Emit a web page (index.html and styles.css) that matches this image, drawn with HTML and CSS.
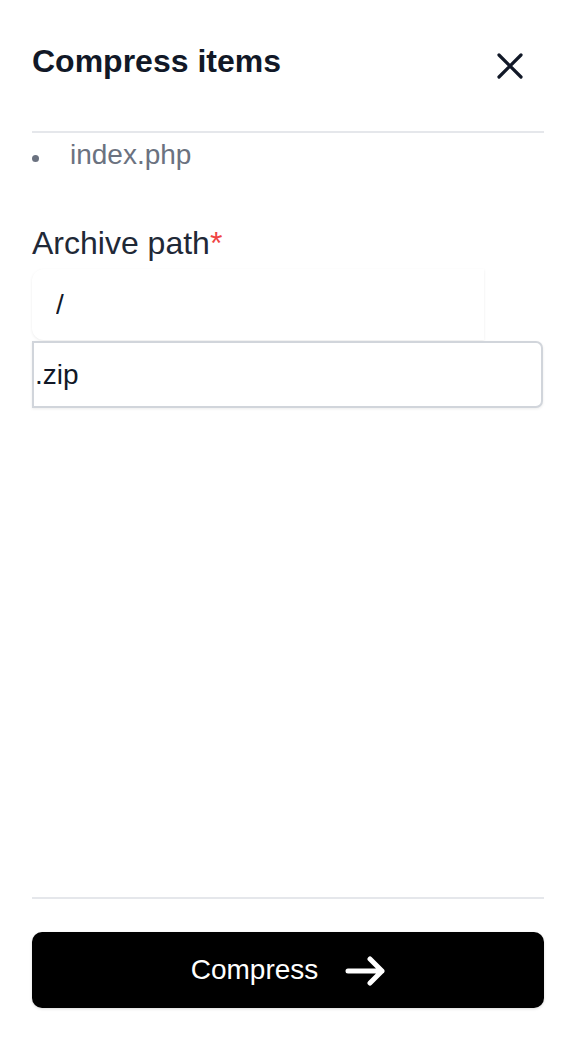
FILE: index.html
```html
<!DOCTYPE html>
<html lang="en">
<head>
<meta charset="utf-8">
<title>Compress items</title>
<link rel="stylesheet" href="styles.css">
</head>
<body>
<div class="dialog">
  <header class="dialog-header">
    <h1 class="dialog-title">Compress items</h1>
    <button class="close-btn" type="button" aria-label="Close">
      <svg width="26" height="26" viewBox="0 0 26 26" fill="none" stroke="#111827" stroke-width="3.2" stroke-linecap="round"><path d="M2 2L24 24M24 2L2 24"/></svg>
    </button>
  </header>
  <main class="dialog-body">
    <ul class="item-list">
      <li class="item">index.php</li>
    </ul>
    <label class="field-label" for="path">Archive path<span class="required">*</span></label>
    <div class="path-field">
      <input id="path" class="path-input" type="text" value="/">
      <input class="suffix-input" type="text" value=".zip">
    </div>
  </main>
  <footer class="dialog-footer">
    <button class="submit-btn" type="button">
      <span>Compress</span>
      <svg width="40" height="30" viewBox="0 0 40 30" fill="none" stroke="#ffffff" stroke-width="5" stroke-linecap="round" stroke-linejoin="round"><path d="M3 15H37M25 3L37 15L25 27"/></svg>
    </button>
  </footer>
</div>
</body>
</html>
```
FILE: styles.css
```css
* { box-sizing: border-box; }
html, body { margin: 0; padding: 0; background: #ffffff; }
body { font-family: "Liberation Sans", Arial, sans-serif; color: #1f2937; }

.dialog {
  height: 100vh;
  display: flex;
  flex-direction: column;
  padding: 0 32px;
}

.dialog-header {
  display: flex;
  justify-content: space-between;
  align-items: flex-start;
  padding-top: 41px;
  padding-bottom: 50px;
  border-bottom: 2px solid #e5e7eb;
}
.dialog-title {
  margin: 0;
  font-size: 32px;
  line-height: 40px;
  font-weight: 700;
  color: #111827;
}
.close-btn {
  margin: 12px 21px 0 0;
  padding: 0;
  border: 0;
  background: transparent;
  width: 26px;
  height: 26px;
  display: flex;
}

.dialog-body { flex: 1; }

.item-list { list-style: none; margin: 0; padding: 2px 0 0; }
.item {
  display: flex;
  align-items: center;
  gap: 31px;
  font-size: 28px;
  line-height: 40px;
  color: #6b7280;
}
.item::before {
  content: "";
  width: 7px;
  height: 7px;
  border-radius: 50%;
  background: #6b7280;
  margin-top: 6px;
}

.field-label {
  display: block;
  margin-top: 44px;
  font-size: 32px;
  line-height: 48px;
  color: #1f2937;
}
.required { color: #ef4444; }

.path-field { margin-top: 2px; }
.path-input {
  display: block;
  width: 452px;
  height: 71px;
  border: 0;
  border-radius: 12px 0 0 12px;
  box-shadow: 0 1px 3px rgba(0, 0, 0, 0.08);
  padding: 0 0 0 24px;
  font-family: "Liberation Sans", Arial, sans-serif;
  font-size: 28px;
  color: #111827;
  background: #ffffff;
  outline: none;
}
.suffix-input {
  display: block;
  width: 511px;
  height: 67px;
  margin-top: 1px;
  border: 2px solid #d1d5db;
  border-radius: 0 7px 7px 0;
  box-shadow: 0 1px 3px rgba(0, 0, 0, 0.08);
  padding: 0 0 0 1px;
  font-family: "Liberation Sans", Arial, sans-serif;
  font-size: 28px;
  color: #111827;
  background: #ffffff;
  outline: none;
}

.dialog-footer {
  border-top: 2px solid #e5e7eb;
  padding: 33px 0 32px;
}
.submit-btn {
  width: 100%;
  height: 76px;
  border: 0;
  border-radius: 10px;
  background: #000000;
  color: #ffffff;
  display: flex;
  align-items: center;
  justify-content: center;
  gap: 27px;
  font-family: "Liberation Sans", Arial, sans-serif;
  font-size: 28px;
  box-shadow: 0 1px 3px rgba(0, 0, 0, 0.15);
  cursor: pointer;
}
.submit-btn svg { margin-top: 2px; }
```
